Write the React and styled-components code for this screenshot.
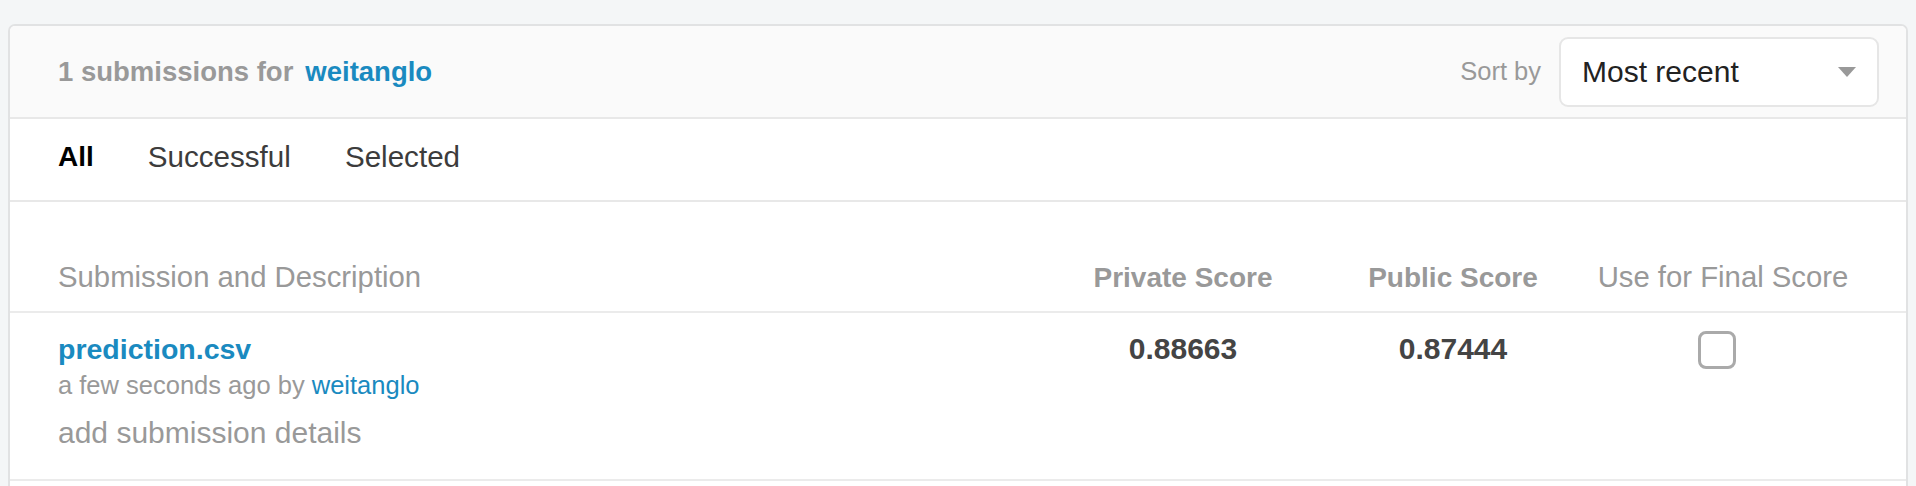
import styled, { createGlobalStyle } from "styled-components"

const GlobalStyle = createGlobalStyle`
    body {
        margin: 0;
        background-color: #f4f6f7;
        font-family: "Liberation Sans", Arial, sans-serif;
    }
`

export default function App() {

    return (
        <>
            <GlobalStyle />
            <Page>
                <Card>
                    <Header>
                        <Title>
                            1 submissions for
                            <UserLink>weitanglo</UserLink>
                        </Title>
                        <Sort>
                            <SortLabel>Sort by</SortLabel>
                            <Select>
                                Most recent
                                <Caret />
                            </Select>
                        </Sort>
                    </Header>
                    <Tabs>
                        <Tab active>All</Tab>
                        <Tab>Successful</Tab>
                        <Tab>Selected</Tab>
                    </Tabs>
                    <HeadRow>
                        <HeadCell>Submission and Description</HeadCell>
                        <HeadCell bold center>Private Score</HeadCell>
                        <HeadCell bold center>Public Score</HeadCell>
                        <HeadCell center>Use for Final Score</HeadCell>
                    </HeadRow>
                    <Row>
                        <div>
                            <FileName>prediction.csv</FileName>
                            <Meta>
                                a few seconds ago by <MetaLink>weitanglo</MetaLink>
                            </Meta>
                            <Details>add submission details</Details>
                        </div>
                        <Score>0.88663</Score>
                        <Score>0.87444</Score>
                        <CheckCell>
                            <Checkbox />
                        </CheckCell>
                    </Row>
                </Card>
            </Page>
        </>
    )
}

const Page = styled.div`
    padding: 24px 8px 0 8px;
`

const Card = styled.div`
    border: 2px solid #e1e2e3;
    border-bottom: none;
    border-radius: 7px 7px 0 0;
    background-color: #ffffff;
    padding-bottom: 40px;
    overflow: hidden;
`

const Header = styled.div`
    height: 91px;
    padding: 0 27px 0 48px;
    background-color: #fafafa;
    border-bottom: 2px solid #e8e8e8;
    display: flex;
    align-items: center;
    justify-content: space-between;
`

const Title = styled.div`
    display: flex;
    gap: 12px;
    font-size: 27.5px;
    font-weight: bold;
    color: #999999;
`

const UserLink = styled.span`
    color: #1a8ac0;
`

const Sort = styled.div`
    display: flex;
    align-items: center;
    gap: 18px;
`

const SortLabel = styled.span`
    font-size: 25.5px;
    color: #999999;
`

const Select = styled.div`
    width: 320px;
    height: 70px;
    box-sizing: border-box;
    padding: 0 21px 0 21px;
    border: 2px solid #e6e6e6;
    border-radius: 9px;
    background-color: #ffffff;
    display: flex;
    align-items: center;
    justify-content: space-between;
    font-size: 30px;
    color: #222222;
`

const Caret = styled.span`
    width: 0;
    height: 0;
    border-left: 9.5px solid transparent;
    border-right: 9.5px solid transparent;
    border-top: 10px solid #999999;
`

const Tabs = styled.div`
    display: flex;
    padding: 23px 48px 28px 48px;
    border-bottom: 2px solid #e8e8e8;
    gap: 54px;
`

const Tab = styled.div`
    font-size: ${(props) => (props.active ? "28px" : "29.6px")};
    line-height: 30px;
    font-weight: ${(props) => (props.active ? "bold" : "normal")};
    color: ${(props) => (props.active ? "#000000" : "#3c3c3c")};
`

const Grid = styled.div`
    display: grid;
    grid-template-columns: 1fr 270px 270px 270px;
    padding: 0 48px;
    border-bottom: 2px solid #ebebeb;
`

const HeadRow = styled(Grid)`
    padding-top: 60px;
    padding-bottom: 18px;
    align-items: baseline;
`

const HeadCell = styled.div`
    font-size: ${(props) => (props.bold ? "28px" : "29.3px")};
    line-height: 30px;
    font-weight: ${(props) => (props.bold ? "bold" : "normal")};
    text-align: ${(props) => (props.center ? "center" : "left")};
    color: #999999;
    white-space: nowrap;
`

const Row = styled(Grid)`
    padding-top: 18px;
    padding-bottom: 26px;
    align-items: start;
`

const FileName = styled.div`
    font-size: 28.5px;
    line-height: 36px;
    font-weight: bold;
    color: #1a8ac0;
`

const Meta = styled.div`
    font-size: 25.5px;
    line-height: 36px;
    color: #999999;
`

const MetaLink = styled.span`
    color: #1a8ac0;
`

const Details = styled.div`
    margin-top: 10px;
    font-size: 30px;
    line-height: 40px;
    color: #999999;
`

const Score = styled.div`
    font-size: 30px;
    line-height: 36px;
    font-weight: bold;
    color: #444444;
    text-align: center;
`

const CheckCell = styled.div`
    display: flex;
    justify-content: center;
    padding-right: 12px;
`

const Checkbox = styled.div`
    width: 38px;
    height: 38px;
    box-sizing: border-box;
    border: 3px solid #aaaaaa;
    border-radius: 8px;
    background-color: #ffffff;
`
